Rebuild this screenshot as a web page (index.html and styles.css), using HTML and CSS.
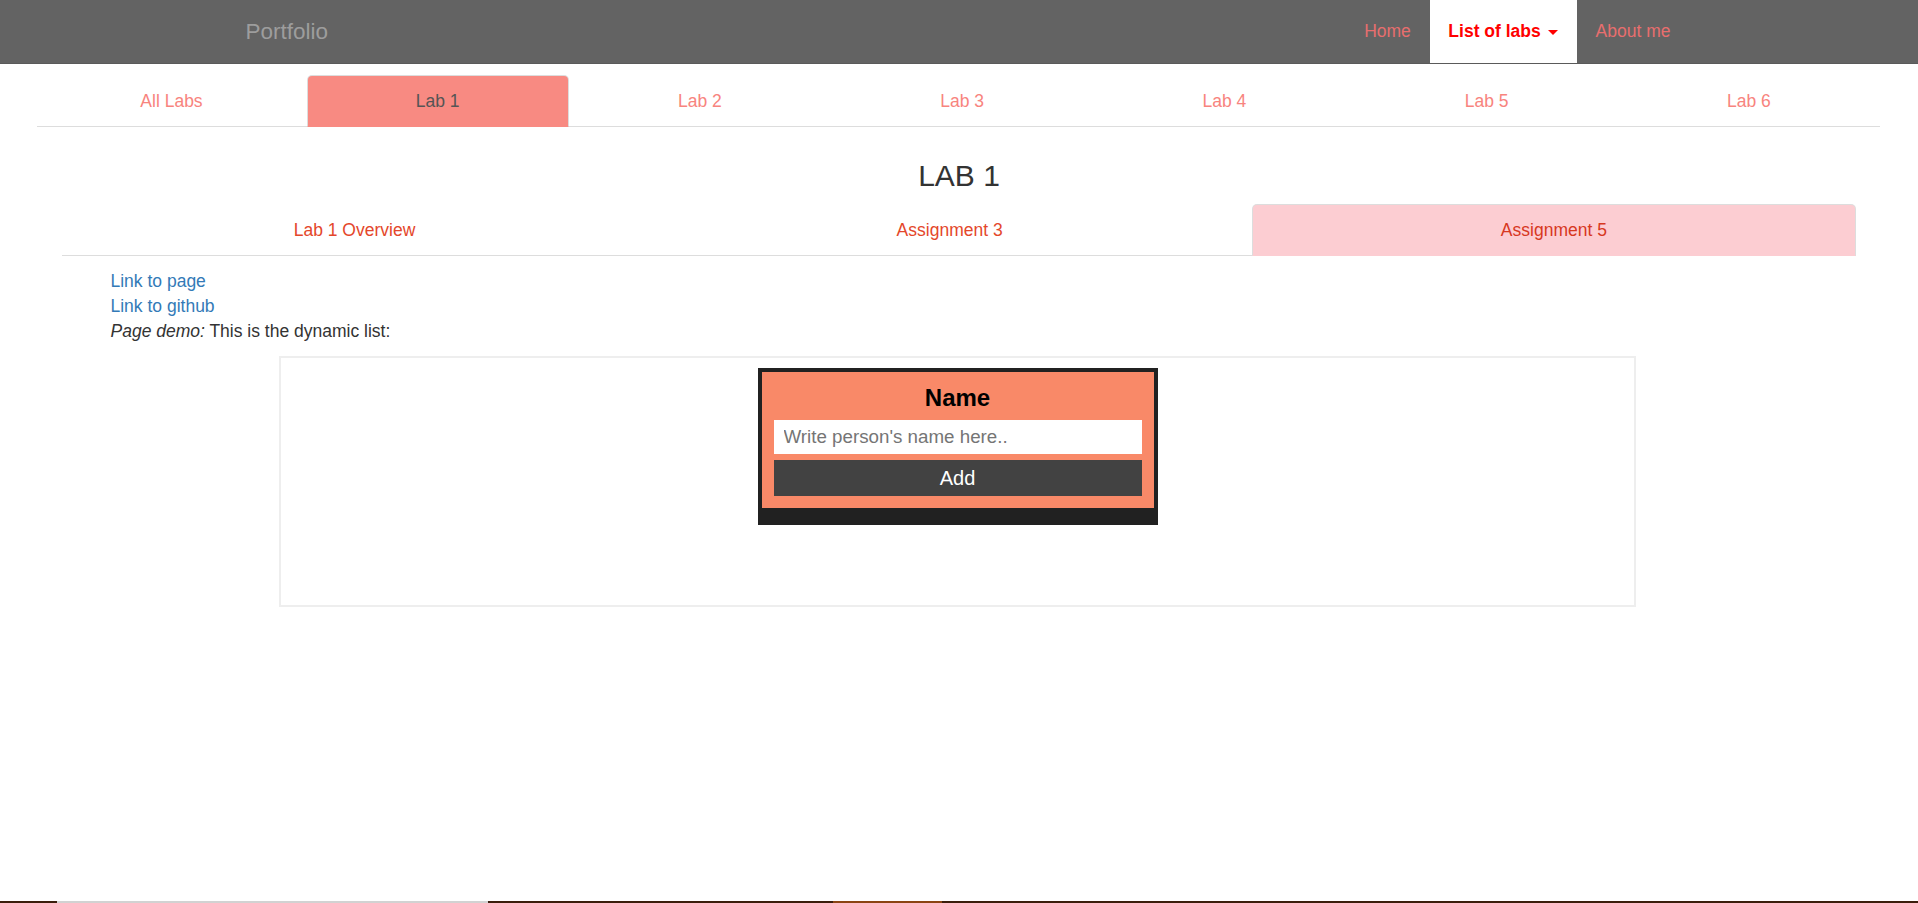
FILE: index.html
```html
<!DOCTYPE html>
<html lang="en">
<head>
<meta charset="utf-8">
<title>Portfolio - Lab 1</title>
<link rel="stylesheet" href="styles.css">
</head>
<body>
  <nav class="navbar">
    <div class="navbar-inner">
      <a class="brand" href="#">Portfolio</a>
      <ul class="nav-links">
        <li><a href="#">Home</a></li>
        <li class="active"><a href="#">List of labs <span class="caret"></span></a></li>
        <li><a href="#">About me</a></li>
      </ul>
    </div>
  </nav>

  <ul class="lab-tabs">
    <li><a href="#">All Labs</a></li>
    <li class="active"><a href="#">Lab 1</a></li>
    <li><a href="#">Lab 2</a></li>
    <li><a href="#">Lab 3</a></li>
    <li><a href="#">Lab 4</a></li>
    <li><a href="#">Lab 5</a></li>
    <li><a href="#">Lab 6</a></li>
  </ul>

  <h3 class="lab-title">LAB 1</h3>

  <ul class="sub-tabs">
    <li><a href="#">Lab 1 Overview</a></li>
    <li><a href="#">Assignment 3</a></li>
    <li class="active"><a href="#">Assignment 5</a></li>
  </ul>

  <div class="links">
    <a href="#">Link to page</a><br>
    <a href="#">Link to github</a><br>
    <em>Page demo:</em> This is the dynamic list:
  </div>

  <div class="demo-frame">
    <div class="list-box">
      <div class="list-inner">
        <div class="list-title">Name</div>
        <input class="list-input" type="text" placeholder="Write person's name here..">
        <button class="list-add" type="button">Add</button>
      </div>
    </div>
  </div>

  <div class="bottom-strip">
    <span class="seg seg-a"></span>
    <span class="seg seg-b"></span>
    <span class="seg seg-c"></span>
    <span class="seg seg-d"></span>
    <span class="seg seg-e"></span>
  </div>
</body>
</html>
```

FILE: styles.css
```css
html, body {
  margin: 0;
  padding: 0;
}

body {
  font-family: "Liberation Sans", Arial, Helvetica, sans-serif;
  font-size: 17.5px;
  line-height: 25px;
  color: #333;
  background: #fff;
  height: 903px;
  overflow: hidden;
  display: flex;
  flex-direction: column;
}

ul {
  list-style: none;
  margin: 0;
  padding: 0;
}

a {
  text-decoration: none;
}

/* ---------- Navbar ---------- */
.navbar {
  flex: none;
  background: #636363;
  border-bottom: 1px solid #5a5a5a;
}

.navbar-inner {
  width: 1462.5px;
  margin-left: 226.75px;
  height: 63px;
  display: flex;
  justify-content: space-between;
  align-items: stretch;
}

.brand {
  padding: 0 18.75px;
  font-size: 22.5px;
  line-height: 63px;
  color: #9d9d9d;
}

.nav-links {
  display: flex;
}

.nav-links li {
  display: flex;
}

.nav-links a {
  display: block;
  padding: 0 18.75px;
  line-height: 63px;
  color: #e86e6e;
}

.nav-links .active a {
  background: #fff;
  color: #ff0000;
  font-weight: bold;
}

.caret {
  display: inline-block;
  width: 0;
  height: 0;
  margin-left: 2.5px;
  vertical-align: middle;
  border-top: 5px solid;
  border-left: 5px solid transparent;
  border-right: 5px solid transparent;
}

/* ---------- Lab tabs ---------- */
.lab-tabs {
  flex: none;
  margin: 11px 38px 0 36.5px;
  display: grid;
  grid-template-columns: 270px repeat(6, 1fr);
  border-bottom: 1px solid #ddd;
}

.lab-tabs li,
.sub-tabs li {
  margin-bottom: -1px;
}

.lab-tabs a,
.sub-tabs a {
  display: block;
  text-align: center;
  padding: 12.5px 0;
  line-height: 25px;
  border: 1px solid transparent;
  border-radius: 5px 5px 0 0;
}

.lab-tabs a {
  color: #f8847e;
}

.lab-tabs .active a {
  background: #f88a82;
  border-color: #ddd #ddd transparent;
  color: #555;
}

/* ---------- Title ---------- */
.lab-title {
  flex: none;
  margin: 31.5px 0 12.5px;
  font-size: 30px;
  line-height: 33px;
  font-weight: normal;
  text-align: center;
  color: #333;
}

/* ---------- Sub tabs ---------- */
.sub-tabs {
  flex: none;
  margin: 0 62px 0 61.5px;
  display: grid;
  grid-template-columns: 586px 1fr 1fr;
  border-bottom: 1px solid #ddd;
}

.sub-tabs a {
  color: #e4472b;
}

.sub-tabs .active a {
  background: #fccdd2;
  border-color: #ddd #ddd transparent;
  color: #d7381f;
}

/* ---------- Links ---------- */
.links {
  flex: none;
  margin: 12.5px 0 0 110.5px;
}

.links a {
  color: #337ab7;
}

/* ---------- Demo frame ---------- */
.demo-frame {
  flex: none;
  box-sizing: border-box;
  width: 1357px;
  height: 251px;
  margin: 12.5px 0 0 279px;
  border: 2px solid #eeeeee;
  padding-top: 10px;
}

.list-box {
  width: 400px;
  margin: 0 auto;
  box-sizing: border-box;
  background: #212121;
  padding: 4px 4px 17px;
}

.list-inner {
  background: #f98968;
  padding: 0 12px 12px;
  display: flex;
  flex-direction: column;
}

.list-title {
  padding-top: 12px;
  margin-bottom: 8px;
  font-size: 24px;
  line-height: 28px;
  font-weight: bold;
  color: #000;
  text-align: center;
}

.list-input {
  box-sizing: border-box;
  width: 100%;
  height: 34px;
  margin: 0;
  padding: 0 10px;
  border: none;
  outline: none;
  background: #fff;
  font-family: "Liberation Sans", Arial, sans-serif;
  font-size: 18.75px;
  color: #333;
}

.list-input::placeholder {
  color: #757575;
}

.list-add {
  box-sizing: border-box;
  width: 100%;
  height: 36px;
  margin: 6px 0 0;
  padding: 0;
  border: none;
  background: #424242;
  color: #fff;
  font-family: "Liberation Sans", Arial, sans-serif;
  font-size: 20px;
}

/* ---------- Bottom strip ---------- */
.bottom-strip {
  flex: none;
  margin-top: auto;
  height: 2px;
  display: flex;
}

.seg {
  display: block;
  height: 2px;
}

.seg-a { width: 57px; background: #3b1e0c; }
.seg-b { width: 431px; background: #d2d2d2; }
.seg-c { width: 345px; background: #3b1e0c; }
.seg-d { width: 109px; background: #8b4513; }
.seg-e { flex: 1; background: #3b1e0c; }
```
